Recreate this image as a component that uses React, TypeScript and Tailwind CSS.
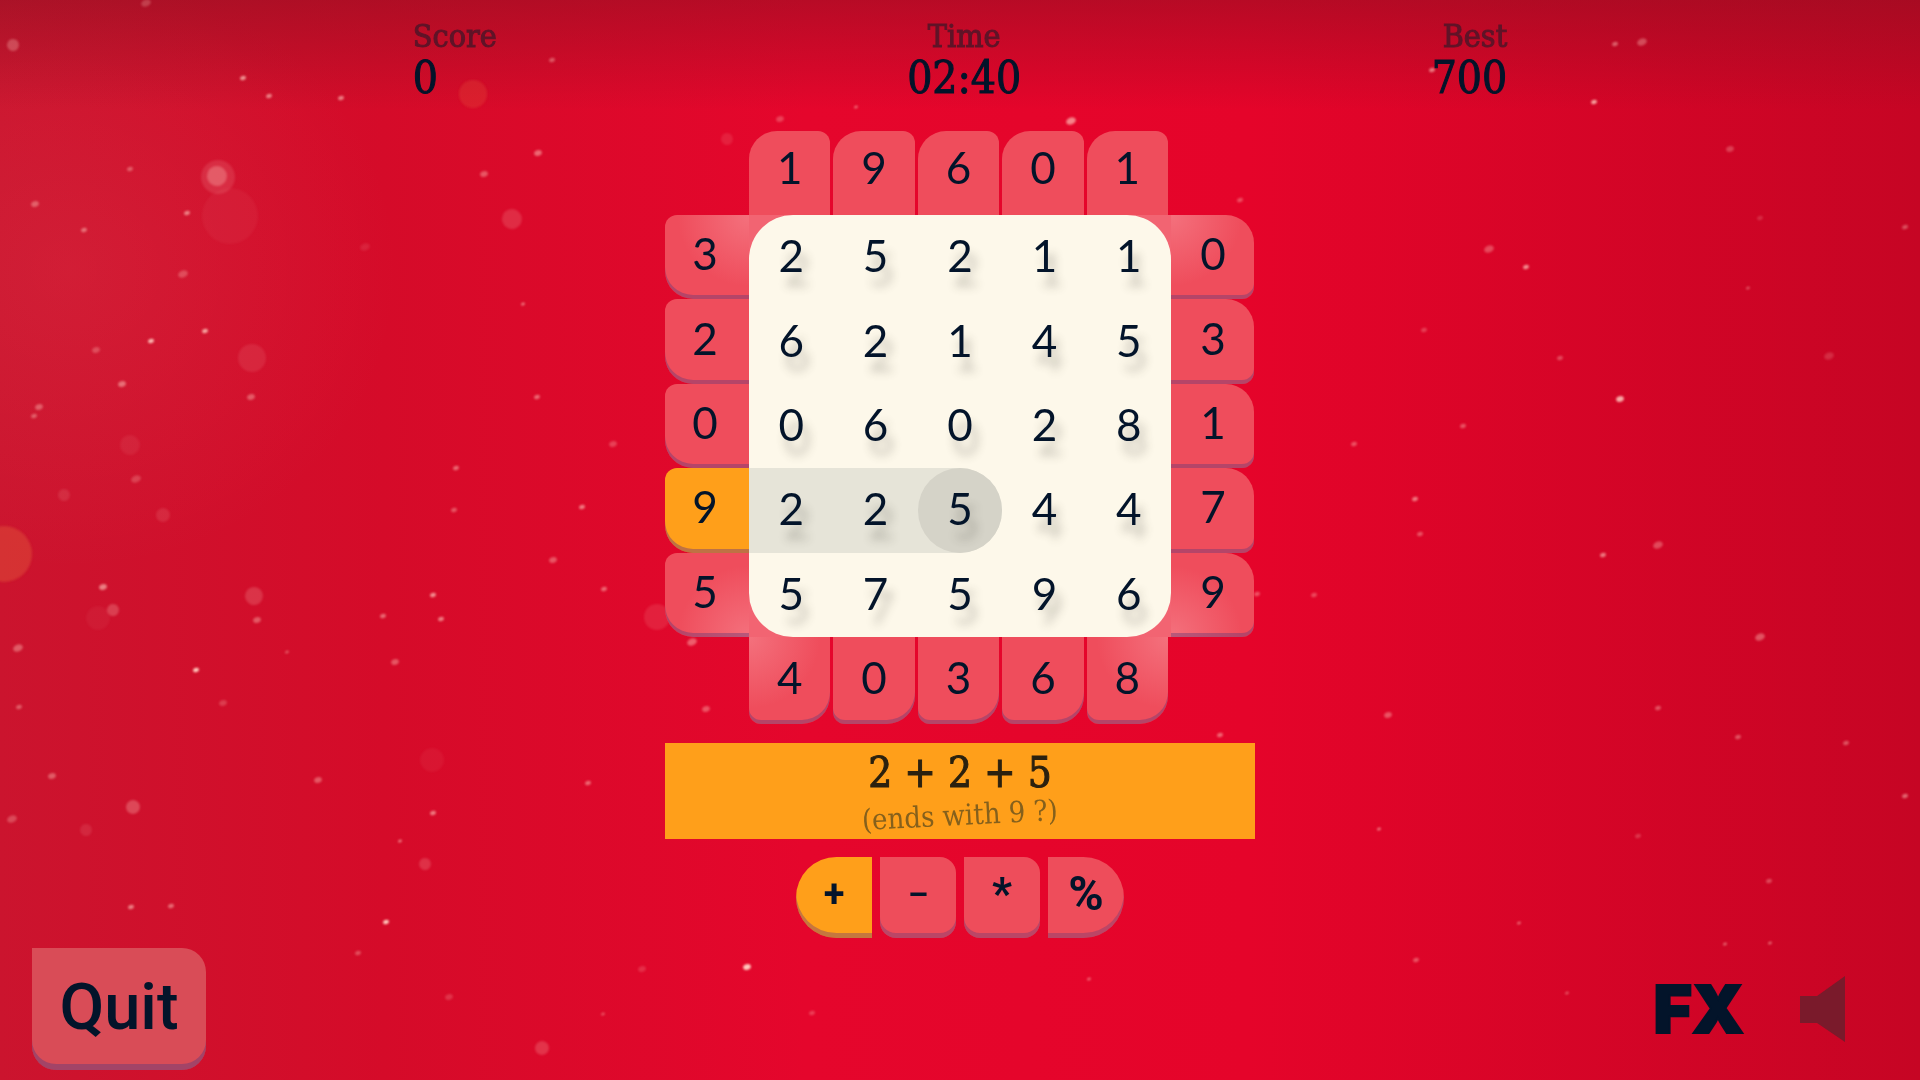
import { useState } from "react";
import clsx from "clsx";

type Speck = [x: number, y: number, r: number, opacity: number];

const SPECKS: Speck[] = [
  [13, 45, 6, 0.3], [146, 3, 5, 0.25], [243, 78, 3, 0.7], [269, 96, 3, 0.6], [341, 98, 3, 0.6],
  [218, 177, 17, 0.14], [217, 176, 10, 0.3], [230, 216, 28, 0.05], [35, 204, 4, 0.4], [84, 230, 3, 0.5],
  [130, 169, 3, 0.4], [187, 213, 3, 0.6], [183, 274, 5, 0.3], [151, 341, 3, 0.9], [205, 331, 3, 0.8],
  [96, 350, 4, 0.3], [122, 384, 4, 0.5], [39, 407, 4, 0.4], [34, 416, 3, 0.4], [252, 358, 14, 0.11],
  [251, 397, 4, 0.4], [130, 445, 10, 0.08], [136, 479, 5, 0.25], [163, 515, 7, 0.13], [64, 495, 6, 0.13],
  [103, 587, 4, 0.6], [113, 610, 6, 0.25], [98, 618, 12, 0.05], [254, 596, 9, 0.2], [257, 620, 4, 0.4],
  [18, 648, 5, 0.4], [196, 670, 3, 1], [19, 707, 3, 0.4], [287, 652, 2, 0.4], [223, 703, 4, 0.25],
  [52, 776, 4, 0.4], [133, 807, 7, 0.3], [12, 819, 5, 0.3], [86, 830, 6, 0.12], [318, 780, 4, 0.4],
  [512, 219, 10, 0.18], [484, 174, 4, 0.4], [538, 153, 4, 0.5], [552, 60, 3, 0.4], [365, 247, 5, 0.12],
  [523, 304, 2, 0.6], [537, 397, 3, 0.5], [456, 468, 3, 0.5], [454, 510, 3, 0.4], [582, 507, 3, 0.6],
  [553, 560, 4, 0.4], [433, 595, 3, 0.7], [441, 619, 3, 0.6], [383, 616, 3, 0.5], [395, 662, 4, 0.4],
  [604, 589, 3, 0.5], [588, 783, 3, 0.5], [433, 813, 3, 0.6], [400, 841, 2, 0.6], [425, 864, 6, 0.2],
  [613, 444, 4, 0.3], [131, 907, 3, 0.6], [171, 906, 3, 0.5], [432, 760, 12, 0.06], [657, 617, 13, 0.13],
  [692, 642, 5, 0.45], [706, 709, 4, 0.4], [386, 922, 3, 1], [747, 967, 4, 1], [542, 1048, 7, 0.22],
  [642, 969, 4, 0.2], [358, 953, 3, 0.35], [449, 997, 4, 0.22], [812, 1013, 3, 0.3], [603, 1014, 2, 0.4],
  [1089, 979, 2, 0.5], [1071, 121, 5, 0.65], [856, 107, 2, 0.5], [780, 119, 4, 0.3], [727, 139, 6, 0.13],
  [1220, 735, 3, 0.5], [1257, 594, 3, 0.4], [1240, 200, 3, 0.4], [1432, 70, 3, 0.6], [1615, 44, 3, 0.45],
  [1642, 42, 5, 0.35], [1594, 102, 3, 0.8], [1730, 149, 4, 0.3], [1489, 249, 5, 0.35], [1526, 267, 3, 0.7],
  [1760, 218, 3, 0.2], [1905, 227, 3, 0.4], [1748, 288, 2, 0.4], [1829, 356, 5, 0.2], [1620, 399, 4, 0.85],
  [1424, 330, 3, 0.3], [1560, 358, 3, 0.35], [1463, 426, 3, 0.4], [1354, 444, 3, 0.4], [1415, 499, 3, 0.6],
  [1420, 534, 3, 0.4], [1603, 555, 3, 0.6], [1658, 545, 5, 0.35], [1760, 637, 5, 0.4], [1658, 708, 3, 0.4],
  [1738, 737, 3, 0.4], [1846, 743, 3, 0.4], [1905, 796, 3, 0.5], [1388, 715, 4, 0.4], [1379, 829, 2, 0.6],
  [1314, 595, 3, 0.35], [1519, 923, 2, 0.5], [1416, 960, 3, 0.4], [1725, 944, 2, 0.5], [1770, 943, 2, 0.5],
  [1567, 993, 2, 0.4], [1638, 836, 3, 0.25], [1769, 881, 3, 0.35],
];

const TOP = [1, 9, 6, 0, 1];
const LEFT = [3, 2, 0, 9, 5];
const RIGHT = [0, 3, 1, 7, 9];
const BOTTOM = [4, 0, 3, 6, 8];
const BOARD = [
  [2, 5, 2, 1, 1],
  [6, 2, 1, 4, 5],
  [0, 6, 0, 2, 8],
  [2, 2, 5, 4, 4],
  [5, 7, 5, 9, 6],
];
const PATH_ROW = 3;
const PATH_END = 2;

const OPERATORS = [
  { sign: "+", label: "Add", shape: "rounded-l-full text-[38px]" },
  { sign: "–", label: "Subtract", shape: "rounded-2xl rounded-tl-none text-[32px]" },
  { sign: "*", label: "Multiply", shape: "rounded-2xl rounded-tl-none text-[44px]" },
  { sign: "%", label: "Modulo", shape: "rounded-r-full text-[48px]" },
];

const DIGIT = "font-['Lato',sans-serif] text-[44px] leading-none text-[#03142a]";
const SLAB = "font-['DejaVu_Serif_Condensed','DejaVu_Serif',serif]";
const STROKE = "[-webkit-text-stroke:1px_currentColor]";

function Backdrop() {
  return (
    <svg
      className="absolute inset-0 -z-10 h-full w-full"
      viewBox="0 0 1920 1080"
      preserveAspectRatio="xMidYMid slice"
      aria-hidden="true"
    >
      <defs>
        <linearGradient id="base">
          <stop offset="0" stopColor="#cb142e" />
          <stop offset="0.2" stopColor="#d50b29" />
          <stop offset="0.42" stopColor="#e5062c" />
          <stop offset="0.65" stopColor="#e5042a" />
          <stop offset="1" stopColor="#c60524" />
        </linearGradient>
        <linearGradient id="shade" x2="0" y2="1">
          <stop offset="0" stopColor="#8a1020" stopOpacity="0.5" />
          <stop offset="1" stopColor="#8a1020" stopOpacity="0" />
        </linearGradient>
        <radialGradient id="haze">
          <stop offset="0" stopColor="#ff8080" stopOpacity="0.1" />
          <stop offset="1" stopColor="#ff8080" stopOpacity="0" />
        </radialGradient>
        <filter id="soft">
          <feGaussianBlur stdDeviation="1" />
        </filter>
      </defs>
      <rect width="1920" height="1080" fill="url(#base)" />
      <ellipse cx="70" cy="270" rx="330" ry="300" fill="url(#haze)" />
      <rect width="1920" height="110" fill="url(#shade)" />
      <g filter="url(#soft)">
        <circle cx="4" cy="554" r="28" fill="#e0503a" opacity="0.5" />
        <circle cx="473" cy="94" r="14" fill="#e8503a" opacity="0.3" />
        {SPECKS.map(([x, y, r, opacity]) => (
          <ellipse
            key={`${x}-${y}`}
            cx={x}
            cy={y}
            rx={r}
            ry={r > 5 ? r : r * 0.7}
            transform={`rotate(-20 ${x} ${y})`}
            fill="#ffc8bc"
            opacity={opacity}
          />
        ))}
      </g>
    </svg>
  );
}

function Stat({ label, value, align }: { label: string; value: string; align: string }) {
  return (
    <div className={clsx(SLAB, STROKE, align)}>
      <div className="text-[32px] leading-9 text-[#5f1428]">{label}</div>
      <div className="text-[44px] leading-[48px] text-[#03142a]">{value}</div>
    </div>
  );
}

function Tile({ value, className, active }: { value: number; className: string; active?: boolean }) {
  return (
    <div
      className={clsx(
        DIGIT,
        "flex items-center justify-center",
        active ? "bg-[#ff9f1a]" : "bg-[#ef4d5c]",
        className
      )}
    >
      {value}
    </div>
  );
}

type SideProps = {
  values: number[];
  className: string;
  corners: [string, string];
  active?: number;
};

function Side({ values, className, corners, active }: SideProps) {
  return (
    <div className="grid grid-rows-5">
      {values.map((value, i) => (
        <Tile
          key={i}
          value={value}
          active={i === active}
          className={clsx(
            "pb-2 shadow-[inset_0_-4px_0_rgba(110,60,120,0.45)]",
            className,
            i === 0 && corners[0],
            i === 4 && corners[1]
          )}
        />
      ))}
    </div>
  );
}

export default function App() {
  const [operator, setOperator] = useState("+");
  const [fx, setFx] = useState(true);
  const [sound, setSound] = useState(false);

  return (
    <main className="relative isolate flex min-h-screen flex-col overflow-hidden bg-[#dc0729]">
      <Backdrop />

      <header className="mx-auto flex w-[57%] justify-between pt-[18px]">
        <Stat label="Score" value="0" align="text-left" />
        <Stat label="Time" value="02:40" align="text-center" />
        <Stat label="Best" value="700" align="text-right" />
      </header>

      <section className="mx-auto mt-[29px] grid grid-cols-[84px_422px_84px] grid-rows-[84px_422px_87px]">
        <div className="col-start-2 row-start-1 grid grid-cols-5">
          {TOP.map((value, i) => (
            <Tile key={i} value={value} className="mr-[3px] rounded-tl-[28px] rounded-tr-xl pb-3" />
          ))}
        </div>

        <div className="col-start-1 row-start-2 grid">
          <Side
            values={LEFT}
            active={3}
            className="rounded-tl-xl rounded-bl-[28px] pr-1"
            corners={[
              "bg-[radial-gradient(circle_at_top_right,#f4717d,#ef4d5c_60%)]",
              "bg-[radial-gradient(circle_at_bottom_right,#f4717d,#ef4d5c_60%)]",
            ]}
          />
        </div>

        <div className="col-start-2 row-start-2 bg-[#f26472]">
          <div className="grid h-full grid-cols-5 grid-rows-5 overflow-hidden rounded-[44px] bg-[#fdf8ea]">
            {BOARD.map((row, r) =>
              row.map((value, c) => {
                const onPath = r === PATH_ROW && c <= PATH_END;
                const end = onPath && c === PATH_END;
                return (
                  <div key={`${r}-${c}`} className={clsx(onPath && "bg-[#e6e4d8]", end && "rounded-r-full")}>
                    <button
                      className={clsx(
                        DIGIT,
                        "h-full w-full pb-1 [text-shadow:6px_14px_10px_rgba(60,60,50,0.3)]",
                        end && "rounded-full bg-[#d5d3c8]"
                      )}
                    >
                      {value}
                    </button>
                  </div>
                );
              })
            )}
          </div>
        </div>

        <div className="col-start-3 row-start-2 grid">
          <Side
            values={RIGHT}
            className="mr-px rounded-tr-[28px] rounded-br-xl pl-px"
            corners={[
              "bg-[radial-gradient(circle_at_top_left,#f4717d,#ef4d5c_60%)]",
              "bg-[radial-gradient(circle_at_bottom_left,#f4717d,#ef4d5c_60%)]",
            ]}
          />
        </div>

        <div className="col-start-2 row-start-3 grid grid-cols-5">
          {BOTTOM.map((value, i) => (
            <Tile
              key={i}
              value={value}
              className={clsx(
                "mr-[3px] rounded-br-[28px] rounded-bl-xl pb-2 shadow-[inset_0_-4px_0_rgba(110,60,120,0.45)]",
                i === 0 && "bg-[radial-gradient(circle_at_top_left,#f4717d,#ef4d5c_60%)]",
                i === 4 && "bg-[radial-gradient(circle_at_top_right,#f4717d,#ef4d5c_60%)]"
              )}
            />
          ))}
        </div>
      </section>

      <section className={clsx(SLAB, "mx-auto mt-[19px] w-[590px] bg-[#ff9f1a] pt-1 text-center")}>
        <p className={clsx(STROKE, "text-[42px] leading-[52px] text-[#2b210f]")}>2 + 2 + 5</p>
        <p className="-rotate-3 pb-2 text-[29px] leading-8 text-[#85601c]">(ends with 9 ?)</p>
      </section>

      <div className="mx-auto mt-[18px] flex gap-2">
        {OPERATORS.map(({ sign, label, shape }) => (
          <button
            key={sign}
            aria-label={label}
            onClick={() => setOperator(sign)}
            className={clsx(
              "h-[81px] w-[76px] pb-2 font-['Roboto',sans-serif] leading-none font-bold text-[#03142a] shadow-[inset_0_-5px_0_rgba(110,60,120,0.4)]",
              operator === sign ? "bg-[#ff9f1a]" : "bg-[#ee4d5b]",
              shape
            )}
          >
            {sign}
          </button>
        ))}
      </div>

      <footer className="mt-auto flex items-center justify-between pr-[72px] pb-[10px] pl-8">
        <button className="h-[122px] w-[174px] rounded-[24px] rounded-tl-none bg-[#d94c57] pb-1 font-['Roboto',sans-serif] text-[65px] leading-none font-medium text-[#03142a] shadow-[inset_0_-6px_0_rgba(110,60,120,0.5)]">
          Quit
        </button>
        <div className="flex items-center gap-[56px]">
          <button
            aria-pressed={fx}
            onClick={() => setFx(!fx)}
            className={clsx(
              "font-['Inter',sans-serif] text-[66px] leading-none font-black text-[#03142a] [-webkit-text-stroke:2px_currentColor]",
              !fx && "opacity-50"
            )}
          >
            FX
          </button>
          <button aria-label="Sound" aria-pressed={sound} onClick={() => setSound(!sound)}>
            <svg className="h-[66px] w-[48px]" viewBox="0 0 48 66" fill={sound ? "#03142a" : "#7a1a2b"}>
              <path d="M0 20h17L45 0v66L17 47H0z" />
            </svg>
          </button>
        </div>
      </footer>
    </main>
  );
}
